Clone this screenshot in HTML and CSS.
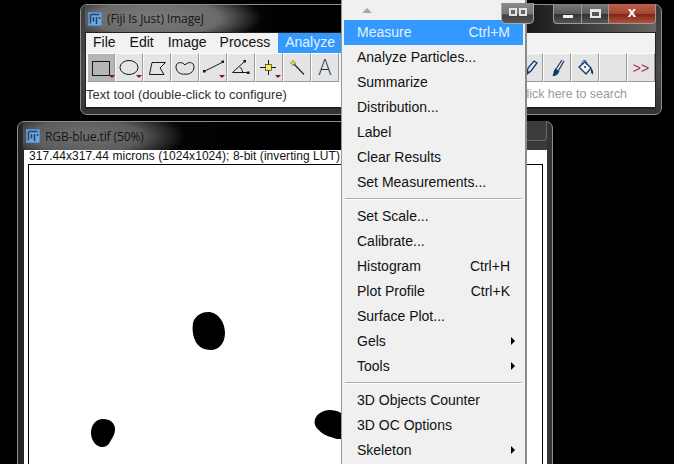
FILE: index.html
```html
<!DOCTYPE html>
<html lang="en">

<head>
    <meta charset="UTF-8" />
    <title>Fiji Is Just ImageJ</title>
    <link rel="stylesheet" href="styles.css">
</head>

<body>

    <svg class="sprites" xmlns="http://www.w3.org/2000/svg" width="0" height="0">
        <defs>
            <symbol id="fiji-logo" viewBox="0 0 14 14">
                <rect x="0" y="0" width="14" height="14" fill="#4f8fd0" />
                <rect x="1" y="1" width="12" height="12" fill="#6fa8dc" />
                <path d="M2.5 2.5h9M2.5 2.5v9M5.5 5v4.5M8.5 5v7M11.5 5v2" fill="none" stroke="#23405f" stroke-width="1.5" />
            </symbol>
            <symbol id="drop-mark" viewBox="0 0 6 3">
                <path d="M0 0h6L3 3z" fill="#8b0f1c" />
            </symbol>
        </defs>
    </svg>

    <!-- main Fiji window -->
    <section class="window fiji-window">
        <header class="titlebar">
            <svg class="app-icon"><use href="#fiji-logo" /></svg>
            <span class="title-text">(Fiji Is Just) ImageJ</span>
            <div class="caption-btns">
                <span class="cap-btn cap-min"><i></i></span>
                <span class="cap-btn cap-max"><i></i></span>
                <span class="cap-btn cap-close">x</span>
            </div>
        </header>
        <div class="panel">
            <nav class="menubar">
                <span class="menu-title">File</span>
                <span class="menu-title">Edit</span>
                <span class="menu-title">Image</span>
                <span class="menu-title">Process</span>
                <span class="menu-title active">Analyze</span>
            </nav>
            <div class="toolbar">
                <div class="tool-group">
                    <span class="tool selected">
                        <svg viewBox="0 0 28 28"><rect x="5.5" y="7.5" width="17" height="14" fill="none" stroke="#111a22" /><use href="#drop-mark" x="22" y="21" width="6" height="3" /></svg>
                    </span>
                    <span class="tool">
                        <svg viewBox="0 0 28 28"><ellipse cx="14" cy="13.5" rx="9" ry="7" fill="none" stroke="#111a22" /><use href="#drop-mark" x="21" y="21" width="6" height="3" /></svg>
                    </span>
                    <span class="tool">
                        <svg viewBox="0 0 28 28"><path d="M6.5 20.5L9 8.5H22.500L17 14l4 6.500z" fill="none" stroke="#111a22" /></svg>
                    </span>
                    <span class="tool">
                        <svg viewBox="0 0 28 28"><path d="M14 11c-2-3-9-4-9 2 0 5 5 8 9 7 4 1 9-2 9-7 0-6-7-5-9-2z" fill="none" stroke="#111a22" /></svg>
                    </span>
                    <span class="tool">
                        <svg viewBox="0 0 28 28"><path d="M5 17.500L24 8" fill="none" stroke="#111a22" /><rect x="4" y="16" width="2.500" height="2.500" fill="#111a22" /><rect x="22.500" y="6.500" width="2.500" height="2.500" fill="#111a22" /><use href="#drop-mark" x="20" y="21" width="6" height="3" /></svg>
                    </span>
                    <span class="tool">
                        <svg viewBox="0 0 28 28"><path d="M21.500 18.500H5.500L18 7M12.500 13c2 1 3 3 3 5.500" fill="none" stroke="#111a22" /><rect x="16.500" y="6" width="2.500" height="2.500" fill="#111a22" /><rect x="20" y="17.500" width="2.500" height="2.500" fill="#111a22" /></svg>
                    </span>
                    <span class="tool">
                        <svg viewBox="0 0 28 28"><path d="M5 13.500h16M13.500 6v15" fill="none" stroke="#111a22" /><rect x="10.500" y="10.500" width="6" height="6" fill="#f2f04a" stroke="#111a22" stroke-width="0.600" /><use href="#drop-mark" x="20" y="21" width="6" height="3" /></svg>
                    </span>
                    <span class="tool">
                        <svg viewBox="0 0 28 28"><path d="M11 10l10 10.500" fill="none" stroke="#1b2a38" stroke-width="1.200" /><path d="M10 6l1 2 2 1-2 1-1 2-1-2-2-1 2-1z" fill="#e6e23a" stroke="#6d6d30" stroke-width="0.500" /></svg>
                    </span>
                    <span class="tool tool-text">A</span>
                </div>
                <div class="tool-group">
                    <span class="tool">
                        <svg viewBox="0 0 28 28"><path d="M12 20l1-6 6-7 3 2-6 8z" fill="#dfe6ee" stroke="#123a6b" stroke-width="1.300" /><path d="M12 20l1-3 2 1z" fill="#123a6b" /></svg>
                    </span>
                    <span class="tool">
                        <svg viewBox="0 0 28 28"><path d="M13 15L19 6M15.500 16.500L21 7" fill="none" stroke="#123a6b" stroke-width="1.200" /><path d="M12.500 14.500l4 2.500c-1 3-3 5-7 5 1-2 1-6 3-7.500z" fill="#123a6b" /></svg>
                    </span>
                    <span class="tool">
                        <svg viewBox="0 0 28 28"><path d="M8 13l6-5 6 6-5 6z" fill="#f4f4f4" stroke="#123a6b" stroke-width="1.300" /><path d="M11 10c0-5 5-5 5 1" fill="none" stroke="#123a6b" /><path d="M20 14c2 2 2.500 4 2 6.500-2-.5-2.500-3-2-6.500z" fill="#123a6b" /><circle cx="14" cy="13" r="1" fill="#123a6b" /></svg>
                    </span>
                    <span class="tool"></span>
                    <span class="tool tool-more">&gt;&gt;</span>
                </div>
            </div>
            <div class="statusbar">
                <span>Text tool (double-click to configure)</span>
                <span class="search-hint">Click here to search</span>
            </div>
        </div>
    </section>

    <!-- image window -->
    <section class="window image-window">
        <header class="titlebar">
            <svg class="app-icon"><use href="#fiji-logo" /></svg>
            <span class="title-text">RGB-blue.tif (50%)</span>
            <div class="caption-btns"><span class="cap-btn cap-dark"></span></div>
        </header>
        <div class="image-panel">
            <div class="image-info">317.44x317.44 microns (1024x1024); 8-bit (inverting LUT)</div>
            <div class="image-canvas">
                <svg viewBox="0 0 513 300" width="513" height="300">
                    <path d="M179 147C189 147 196 157 196 168C196 178 190 185 182 185C174 185 168 181 166 175C163 169 163 159 165 155C168 150 173 147 179 147Z" />
                    <path d="M74 254C81 254 86 258 86 264C86 270 83 273 81 277C79 281 76 282 73 282C67 282 62 275 62 268C62 260 67 254 74 254Z" />
                    <path d="M301 245C307 245 312 247 316 251L316 273C312 275 306 274 302 272C296 271 290 266 287 262C284 257 286 251 291 248C294 246 297 245 301 245Z" />
                </svg>
            </div>
        </div>
    </section>

    <!-- open Analyze menu -->
    <div class="dropdown">
        <div class="scroll-up"><i></i></div>
        <div class="item hover"><span>Measure</span><kbd>Ctrl+M</kbd></div>
        <div class="item"><span>Analyze Particles...</span></div>
        <div class="item"><span>Summarize</span></div>
        <div class="item"><span>Distribution...</span></div>
        <div class="item"><span>Label</span></div>
        <div class="item"><span>Clear Results</span></div>
        <div class="item"><span>Set Measurements...</span></div>
        <hr class="sep">
        <div class="item"><span>Set Scale...</span></div>
        <div class="item"><span>Calibrate...</span></div>
        <div class="item"><span>Histogram</span><kbd>Ctrl+H</kbd></div>
        <div class="item"><span>Plot Profile</span><kbd>Ctrl+K</kbd></div>
        <div class="item"><span>Surface Plot...</span></div>
        <div class="item sub"><span>Gels</span></div>
        <div class="item sub"><span>Tools</span></div>
        <hr class="sep">
        <div class="item"><span>3D Objects Counter</span></div>
        <div class="item"><span>3D OC Options</span></div>
        <div class="item sub"><span>Skeleton</span></div>
    </div>

    <!-- Aero peek button sits on top of the menu -->
    <span class="restack"><i></i><i></i></span>

</body>

</html>
```
FILE: styles.css
```css
html,
body {
    margin: 0;
    height: 100%;
    overflow: hidden;
    background: #000;
    font-family: "Liberation Sans", Arial, sans-serif;
    color: #111;
}

.sprites {
    position: absolute;
    overflow: hidden;
}

/* windows on the desktop */
.window {
    position: absolute;
    box-sizing: border-box;
    border: 1px solid #8c8c8c;
    border-radius: 7px 7px 0 0;
    display: flex;
    flex-direction: column;
    background: #333;
}

.fiji-window {
    left: 80px;
    top: 4px;
    width: 582px;
    height: 111px;
    border-radius: 7px;
    background: linear-gradient(#3a3a3a, #4a4a4a 60%, #333);
    padding: 0 5px 5px 4px;
}

.image-window {
    left: 17px;
    top: 121px;
    width: 536px;
    height: 360px;
    background: linear-gradient(90deg, #222, #333 12px);
    padding: 0 5px 0 5px;
}

.titlebar {
    position: relative;
    flex: none;
    height: 27px;
    display: flex;
    align-items: center;
}

.fiji-window .titlebar {
    background:
        radial-gradient(ellipse 105px 30px at 72px 13px, #7b7b7b 0, #6a6a6a 60%, rgba(40, 40, 40, 0) 100%),
        linear-gradient(90deg, #1e1e1e, #000 35%, #000 70%, #666 100%);
}

.image-window .titlebar {
    height: 28px;
    background:
        radial-gradient(ellipse 100px 30px at 62px 14px, #6f6f6f 0, #5c5c5c 55%, rgba(20, 20, 20, 0) 100%),
        linear-gradient(90deg, #111, #000 40%, #000 88%, #3a3a3a 94%);
}

.app-icon {
    width: 14px;
    height: 14px;
    margin: 0 5px 0 3px;
    flex: none;
}

.title-text {
    font-family: "Open Sans", sans-serif;
    font-size: 12px;
    color: #161616;
    letter-spacing: -0.1px;
}

.caption-btns {
    position: absolute;
    right: 0;
    top: -1px;
    display: flex;
    height: 20px;
}

.cap-btn {
    box-sizing: border-box;
    display: flex;
    align-items: center;
    justify-content: center;
    height: 20px;
    border: 1px solid #9a9a9a;
    border-top: 0;
    background: linear-gradient(#7b7b7b, #5c5c5c 50%, #333 55%, #555);
}

.cap-min {
    width: 29px;
    border-radius: 0 0 0 4px;
}

.cap-min i {
    display: block;
    width: 10px;
    height: 3px;
    margin-top: 6px;
    background: #eee;
}

.cap-max {
    width: 27px;
    border-left: 0;
}

.cap-max i {
    display: block;
    box-sizing: border-box;
    width: 11px;
    height: 9px;
    border: 2px solid #e6e6e6;
    border-top-width: 3px;
    background: #555;
}

.cap-close {
    width: 47px;
    border-left: 0;
    border-radius: 0 0 4px 0;
    background: linear-gradient(#b8614c, #a8442f 50%, #7f2716 55%, #b4503a);
    color: #fff;
    font-weight: bold;
    font-size: 15px;
    line-height: 14px;
    padding-bottom: 3px;
}

.cap-dark {
    width: 38px;
    background: #3c3c3c;
    border-color: #6a6a6a;
    border-radius: 0 0 4px 4px;
}

/* ImageJ panel */
.panel {
    flex: 1;
    display: flex;
    flex-direction: column;
    background: #fff;
    border: 1px solid #222;
    border-bottom-width: 2px;
    min-height: 0;
}

.menubar {
    flex: none;
    height: 20px;
    display: flex;
    background: #f2f2f2;
    font-size: 14px;
    line-height: 18px;
}

.menu-title {
    padding: 0 7px;
}

.menu-title:nth-child(3) {
    padding-right: 6px;
}

.menu-title:nth-child(4) {
    padding-right: 8px;
}

.menu-title.active {
    background: #3399ff;
    color: #e3f1ff;
    width: 49px;
}

.toolbar {
    flex: none;
    height: 29px;
    display: flex;
    justify-content: space-between;
    padding-left: 1px;
    background: #f4f4f4;
}

.tool-group {
    display: flex;
}

.tool {
    box-sizing: border-box;
    width: 28px;
    height: 29px;
    display: flex;
    align-items: center;
    justify-content: center;
    background: #e4e4e4;
    border: 1px solid #fdfdfd;
    border-right-color: #9c9c9c;
    border-bottom-color: #9c9c9c;
}

.tool svg {
    display: block;
    width: 28px;
    height: 28px;
    flex: none;
}

.tool.selected {
    background: #b6b6b6;
}

.tool-text {
    font-family: Inter, sans-serif;
    font-weight: 200;
    font-size: 21px;
    color: #23303c;
}

.tool-more {
    font-size: 14px;
    color: #a8323c;
}

.statusbar {
    flex: 1;
    display: flex;
    justify-content: space-between;
    align-items: center;
    background: #fff;
    font-size: 13px;
    color: #333;
    padding: 0 28px 1px 0;
}

.search-hint {
    font-size: 12.4px;
    color: #9a9a9a;
}

/* image window content */
.image-panel {
    flex: 1;
    background: #fff;
    border-left: 1px solid #222;
    padding: 0 4px 0 4px;
}

.image-info {
    height: 14px;
    padding-left: 1px;
    font-size: 12px;
    letter-spacing: 0.05px;
    line-height: 13px;
    color: #111;
    white-space: nowrap;
}

.image-canvas {
    border: 1px solid #000;
    background: #fff;
    height: 320px;
    overflow: hidden;
}

.image-canvas svg {
    display: block;
}

/* dropdown */
.dropdown {
    position: absolute;
    left: 341px;
    top: -1px;
    box-sizing: border-box;
    width: 186px;
    height: 480px;
    padding: 0 2px;
    background: #f0f0f0;
    border: 1px solid #979797;
    border-right: 2px solid #8a8a8a;
    font-size: 14px;
}

.scroll-up {
    height: 20px;
    padding-left: 18px;
    padding-top: 8px;
    box-sizing: border-box;
}

.scroll-up i {
    display: block;
    width: 0;
    height: 0;
    border: 5px solid transparent;
    border-top: 0;
    border-bottom: 5px solid #a8a8a8;
}

.item {
    position: relative;
    height: 25px;
    line-height: 25px;
    display: flex;
    justify-content: space-between;
    padding: 0 13px;
}

.item kbd {
    font: inherit;
}

.item.hover {
    background: #3399ff;
    color: #e3f1ff;
}

.item.sub::after {
    content: "";
    position: absolute;
    right: 8px;
    top: 8px;
    border: 4px solid transparent;
    border-left: 4px solid #000;
    border-right: 0;
}

.sep {
    height: 1px;
    margin: 3px 1px 5px 1px;
    border: 0;
    background: #acacac;
    box-shadow: 0 1px 0 #fff;
}

/* peek button over the menu corner */
.restack {
    position: absolute;
    left: 501px;
    top: 3px;
    box-sizing: border-box;
    width: 33px;
    height: 21px;
    display: flex;
    align-items: center;
    justify-content: center;
    gap: 2px;
    padding-bottom: 3px;
    border: 1px solid #a8a8a8;
    border-top: 0;
    border-radius: 0 0 5px 5px;
    background: linear-gradient(#8a8a8a, #777 55%, #3f3f3f 60%, #555);
}

.restack i {
    display: block;
    box-sizing: border-box;
    width: 8px;
    height: 8px;
    border: 2px solid #e2e2e2;
    background: #666;
}
```
